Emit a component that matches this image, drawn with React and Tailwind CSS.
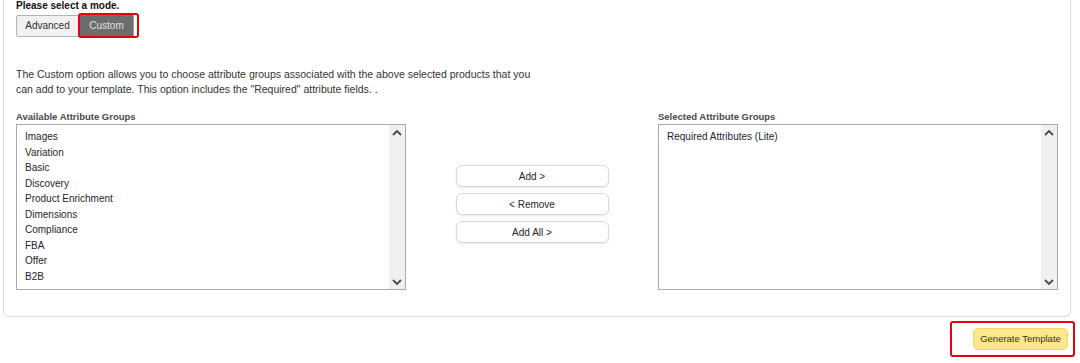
import React from "react";

const items = [
  "Images",
  "Variation",
  "Basic",
  "Discovery",
  "Product Enrichment",
  "Dimensions",
  "Compliance",
  "FBA",
  "Offer",
  "B2B",
];

function Up() {
  return (
    <svg width="10" height="7" viewBox="0 0 10 7" fill="none">
      <path d="M1 6 L5 2 L9 6" stroke="#4a4a4a" strokeWidth="1.8" />
    </svg>
  );
}
function Down() {
  return (
    <svg width="10" height="7" viewBox="0 0 10 7" fill="none">
      <path d="M1 1 L5 5 L9 1" stroke="#4a4a4a" strokeWidth="1.8" />
    </svg>
  );
}

function ListBox({ entries, width }) {
  return (
    <div className={`flex h-[166px] border border-[#a9a9a9] bg-white ${width}`}>
      <div className="flex-1 pl-[8px] pt-[4px] text-[10px] leading-[15.5px] text-[#1f2430]">
        {entries.map((e) => (
          <div key={e}>{e}</div>
        ))}
      </div>
      <div className="flex w-[16px] flex-col items-center justify-between bg-[#f0f0f0] pt-[4px] pb-[3px]">
        <Up />
        <Down />
      </div>
    </div>
  );
}

function MidButton({ children }) {
  return (
    <button className="h-[22px] w-[153px] rounded-[6px] border border-[#d5d9d9] bg-white text-[10px] text-[#1f2430] shadow-[0_1px_2px_rgba(0,0,0,0.08)]">
      {children}
    </button>
  );
}

export default function App() {
  return (
    <div
      className="h-[363px] w-[1080px] overflow-hidden bg-white"
      style={{ fontFamily: '"Liberation Sans", Arial, sans-serif' }}
    >
      <div className="ml-[3px] h-[317px] w-[1068px] rounded-b-[6px] border-x border-b border-[#dcdcdc] pl-[12px] pr-[12px]">
        <div className="pt-[0px] text-[10px] font-bold leading-[12px] text-[#111]">
          Please select a mode.
        </div>
        <div className="mt-[1px] flex items-center">
          <button className="h-[22px] w-[63px] rounded-l-[2px] border border-[#b5b5b5] bg-[#f1f1f1] text-[10px] text-[#333]">
            Advanced
          </button>
          <div className="-ml-[1px] flex h-[25px] w-[61px] items-center rounded-[3px] border-2 border-[#e8000b] pl-[0px] pr-[3px]">
            <button className="h-[21px] w-[55px] border-r border-[#9a9a9a] bg-[#6d6d6d] text-[10px] text-[#e0e0e0]">
              Custom
            </button>
          </div>
        </div>
        <div className="mt-[29px] w-[528px] text-[10.5px] leading-[15px] text-[#333]">
          The Custom option allows you to choose attribute groups associated with the above selected products that you can add to your template. This option includes the "Required" attribute fields. .
        </div>
        <div className="mt-[14px] flex">
          <div className="w-[390px]">
            <div className="mb-[1px] text-[9.5px] font-bold leading-[12px] text-[#4a4a4a]">
              Available Attribute Groups
            </div>
            <ListBox entries={items} width="w-[390px]" />
          </div>
          <div className="flex flex-1 justify-center pt-[54px]">
            <div className="flex flex-col gap-[6px]">
              <MidButton>Add &gt;</MidButton>
              <MidButton>&lt; Remove</MidButton>
              <MidButton>Add All &gt;</MidButton>
            </div>
          </div>
          <div className="w-[400px]">
            <div className="mb-[1px] text-[9.5px] font-bold leading-[12px] text-[#4a4a4a]">
              Selected Attribute Groups
            </div>
            <ListBox entries={["Required Attributes (Lite)"]} width="w-[400px]" />
          </div>
        </div>
      </div>
      <div className="flex justify-end pr-[5px] pt-[4px]">
        <div className="flex h-[36px] w-[125px] items-center justify-end rounded-[3px] border-2 border-[#e8000b] pr-[5px]">
          <button className="h-[22px] w-[95px] rounded-[5px] border border-[#f2d66a] bg-[#fde68b] text-[9.5px] text-[#333]">
            Generate Template
          </button>
        </div>
      </div>
    </div>
  );
}
